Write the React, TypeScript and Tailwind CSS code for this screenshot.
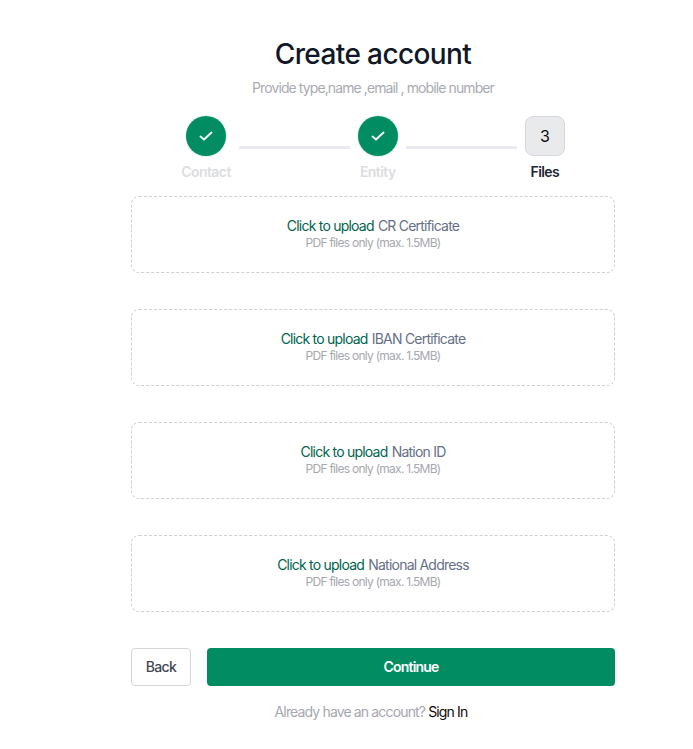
import React from "react";

const font = { fontFamily: "Inter, sans-serif" };

function Check() {
  return (
    <svg width="16" height="16" viewBox="0 0 16 16" fill="none" stroke="#f3f4f6" strokeWidth="2" strokeLinecap="round" strokeLinejoin="round">
      <path d="M2.5 8.6 6 11.6 13.5 4.6" />
    </svg>
  );
}

function Done({ label }: { label: string }) {
  return (
    <div className="flex flex-col items-center shrink-0">
      <div className="w-10 h-10 rounded-full bg-[#018d61] flex items-center justify-center shadow-[0_0_0_1px_#e3f5ee]">
        <Check />
      </div>
      <span className="mt-[7px] text-[14px] leading-[17px] font-semibold text-[#dcdde1] tracking-[-0.55px]">{label}</span>
    </div>
  );
}

function Line() {
  return <div className="h-[3px] bg-[#eaeaf0] w-[111px] shrink-0 mt-[30px]" />;
}

function Upload({ name }: { name: string }) {
  return (
    <div className="h-[77px] rounded-lg border border-dashed border-[#d0d0d4] flex flex-col items-center justify-center pb-[3px]">
      <p className="text-[14px] leading-[17px] tracking-[-0.78px] text-[#667085]">
        <span className="text-[#00634f]">Click to upload</span>
        <span className="ml-[1px]"> {name}</span>
      </p>
      <p className="text-[12px] leading-[15px] mt-[1px] tracking-[-0.73px] text-[#a6a8b0]">PDF files only (max. 1.5MB)</p>
    </div>
  );
}

export default function App() {
  return (
    <div style={font} className="w-[693px] h-[749px] bg-white overflow-hidden">
      <div className="w-[484px] ml-[131px] flex flex-col">
        <h1 className="mt-[35px] text-center text-[28px] leading-[38px] font-medium text-[#101828] tracking-[-0.6px]">Create account</h1>
        <p className="mt-[6px] text-center text-[14px] leading-[17px] text-[#a9abb3] tracking-[-0.9px]">Provide type,name ,email , mobile number</p>
        <div className="mt-[20px] flex justify-center">
          <div className="flex items-start gap-2">
            <Done label="Contact" />
            <Line />
            <Done label="Entity" />
            <Line />
            <div className="flex flex-col items-center shrink-0">
              <div className="w-10 h-10 rounded-lg bg-[#e9eaeb] border border-[#d5d7da] flex items-center justify-center pb-[1px] text-[16px] text-[#0a0a0a]">3</div>
              <span className="mt-[7px] text-[14px] leading-[17px] font-semibold text-[#1d2433] tracking-[-0.55px]">Files</span>
            </div>
          </div>
        </div>
        <div className="mt-[16px] flex flex-col gap-9">
          <Upload name="CR Certificate" />
          <Upload name="IBAN Certificate" />
          <Upload name="Nation ID" />
          <Upload name="National Address" />
        </div>
        <div className="mt-9 flex gap-4">
          <button className="w-[60px] h-[38px] rounded-[4px] border border-[#d5d7da] bg-white pb-[2px] text-[14px] font-medium text-[#414651] tracking-[-0.7px]">Back</button>
          <button className="flex-1 h-[38px] rounded-[4px] bg-[#018d61] pb-[2px] text-white text-[14px] font-semibold tracking-[-0.8px]">Continue</button>
        </div>
        <p className="mt-[17px] pr-[4px] text-center text-[14px] leading-[17px] tracking-[-0.85px] text-[#a6a8b0]">
          Already have an account? <span className="text-[#0a0a0a]">Sign In</span>
        </p>
      </div>
    </div>
  );
}
